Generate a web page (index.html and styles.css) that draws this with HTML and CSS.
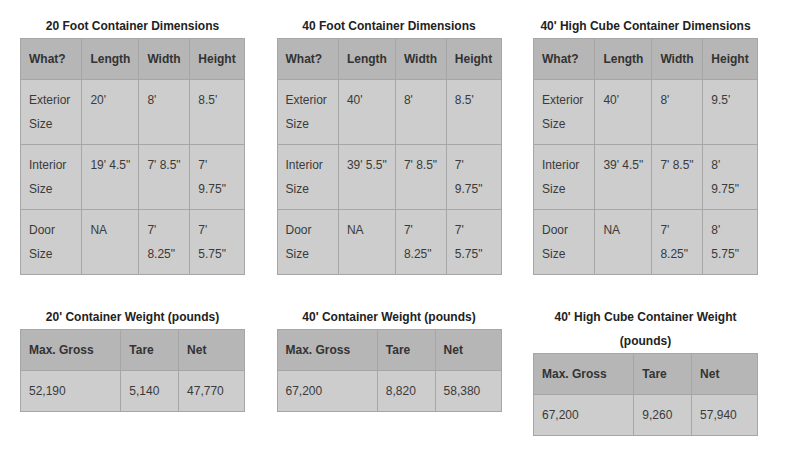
FILE: index.html
```html
<!DOCTYPE html>
<html>
<head>
<meta charset="utf-8">
<link rel="stylesheet" href="styles.css">
</head>
<body>
<div class="page">
  <div class="section">
    <h4 class="title">20 Foot Container Dimensions</h4>
    <table class="spec">
      <tr class="head"><th>What?</th><th>Length</th><th>Width</th><th>Height</th></tr>
      <tr><td>Exterior Size</td><td>20'</td><td>8'</td><td>8.5'</td></tr>
      <tr><td>Interior Size</td><td>19' 4.5"</td><td>7' 8.5"</td><td>7' 9.75"</td></tr>
      <tr><td>Door Size</td><td>NA</td><td>7' 8.25"</td><td>7' 5.75"</td></tr>
    </table>
  </div>
  <div class="section">
    <h4 class="title">40 Foot Container Dimensions</h4>
    <table class="spec">
      <tr class="head"><th>What?</th><th>Length</th><th>Width</th><th>Height</th></tr>
      <tr><td>Exterior Size</td><td>40'</td><td>8'</td><td>8.5'</td></tr>
      <tr><td>Interior Size</td><td>39' 5.5"</td><td>7' 8.5"</td><td>7' 9.75"</td></tr>
      <tr><td>Door Size</td><td>NA</td><td>7' 8.25"</td><td>7' 5.75"</td></tr>
    </table>
  </div>
  <div class="section">
    <h4 class="title">40' High Cube Container Dimensions</h4>
    <table class="spec">
      <tr class="head"><th>What?</th><th>Length</th><th>Width</th><th>Height</th></tr>
      <tr><td>Exterior Size</td><td>40'</td><td>8'</td><td>9.5'</td></tr>
      <tr><td>Interior Size</td><td>39' 4.5"</td><td>7' 8.5"</td><td>8' 9.75"</td></tr>
      <tr><td>Door Size</td><td>NA</td><td>7' 8.25"</td><td>8' 5.75"</td></tr>
    </table>
  </div>
  <div class="section">
    <h4 class="title">20' Container Weight (pounds)</h4>
    <table class="spec">
      <tr class="head"><th>Max. Gross</th><th>Tare</th><th>Net</th></tr>
      <tr><td>52,190</td><td>5,140</td><td>47,770</td></tr>
    </table>
  </div>
  <div class="section">
    <h4 class="title">40' Container Weight (pounds)</h4>
    <table class="spec">
      <tr class="head"><th>Max. Gross</th><th>Tare</th><th>Net</th></tr>
      <tr><td>67,200</td><td>8,820</td><td>58,380</td></tr>
    </table>
  </div>
  <div class="section">
    <h4 class="title">40' High Cube Container Weight (pounds)</h4>
    <table class="spec">
      <tr class="head"><th>Max. Gross</th><th>Tare</th><th>Net</th></tr>
      <tr><td>67,200</td><td>9,260</td><td>57,940</td></tr>
    </table>
  </div>
</div>
</body>
</html>
```
FILE: styles.css
```css
html, body {
  margin: 0;
  padding: 0;
  background: #ffffff;
}
body {
  font-family: "Liberation Sans", Arial, sans-serif;
  font-size: 12px;
  line-height: 24px;
  color: #333333;
}
.page {
  display: grid;
  grid-template-columns: 225px 225px 225px;
  column-gap: 31.5px;
  row-gap: 30px;
  padding: 14px 0 0 20px;
  align-items: start;
}
.section {
  display: flex;
  flex-direction: column;
}
.title {
  margin: 0;
  font-size: 12px;
  font-weight: bold;
  line-height: 24px;
  text-align: center;
  color: #222222;
}
.spec {
  width: 100%;
  border-collapse: collapse;
  background: #cdcdcd;
}
.spec th,
.spec td {
  border: 1px solid #a6a6a6;
  padding: 8px 8px;
  text-align: left;
  vertical-align: top;
  line-height: 24px;
}
.spec th {
  background: #b6b6b6;
  font-weight: bold;
  color: #333333;
}
.spec td {
  color: #3a3a3a;
}
```
